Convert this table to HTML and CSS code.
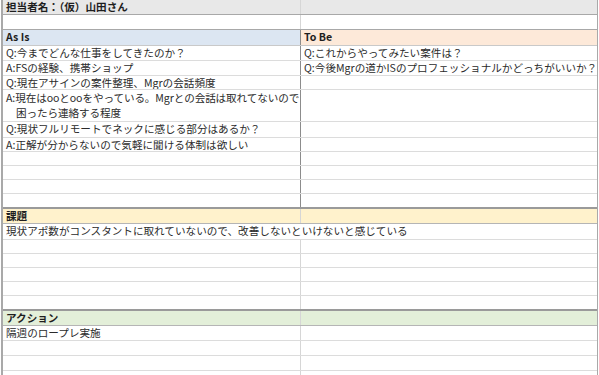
FILE: index.html
```html
<!DOCTYPE html>
<html lang="ja">
<head>
<meta charset="utf-8">
<title>面談メモ</title>
<link rel="stylesheet" href="styles.css">
</head>
<body>
<div class="sheet">
  <div class="row title h15 thick"><div class="c l bold">担当者名：（仮）山田さん</div><div class="c r"></div></div>
  <div class="row h15 thick"><div class="c l"></div><div class="c r"></div></div>

  <div class="row h16 asis-head"><div class="c l dark blue bold">As Is</div><div class="c r peach bold">To Be</div></div>
  <div class="row h15"><div class="c l dark">Q:今までどんな仕事をしてきたのか？</div><div class="c r">Q:これからやってみたい案件は？</div></div>
  <div class="row h15"><div class="c l dark">A:FSの経験、携帯ショップ</div><div class="c r">Q:今後Mgrの道かISのプロフェッショナルかどっちがいいか？</div></div>
  <div class="row h14"><div class="c l dark">Q:現在アサインの案件整理、Mgrの会話頻度</div><div class="c r"></div></div>
  <div class="row h32"><div class="c l dark wrap"><span class="line">A:現在はooとooをやっている。Mgrとの会話は取れてないので</span><span class="line indent">困ったら連絡する程度</span></div><div class="c r"></div></div>
  <div class="row h16"><div class="c l dark">Q:現状フルリモートでネックに感じる部分はあるか？</div><div class="c r"></div></div>
  <div class="row h14"><div class="c l dark">A:正解が分からないので気軽に聞ける体制は欲しい</div><div class="c r"></div></div>
  <div class="row h14"><div class="c l dark"></div><div class="c r"></div></div>
  <div class="row h14"><div class="c l dark"></div><div class="c r"></div></div>
  <div class="row h14"><div class="c l dark"></div><div class="c r"></div></div>
  <div class="row h15 thick2"><div class="c l dark"></div><div class="c r"></div></div>

  <div class="row h15 yellow mid"><div class="c l bold">課題</div><div class="c r"></div></div>
  <div class="row h16"><div class="c l over">現状アポ数がコンスタントに取れていないので、改善しないといけないと感じている</div><div class="c r"></div></div>
  <div class="row h14"><div class="c l"></div><div class="c r"></div></div>
  <div class="row h14"><div class="c l"></div><div class="c r"></div></div>
  <div class="row h14"><div class="c l"></div><div class="c r"></div></div>
  <div class="row h14"><div class="c l"></div><div class="c r"></div></div>
  <div class="row h15 thick2"><div class="c l"></div><div class="c r"></div></div>

  <div class="row h15 green mid"><div class="c l bold">アクション</div><div class="c r"></div></div>
  <div class="row h15"><div class="c l">隔週のロープレ実施</div><div class="c r"></div></div>
  <div class="row h15"><div class="c l"></div><div class="c r"></div></div>
  <div class="row h15"><div class="c l"></div><div class="c r"></div></div>
  <div class="row h15"><div class="c l"></div><div class="c r"></div></div>
</div>
</body>
</html>
```

FILE: styles.css
```css
html, body {
  margin: 0;
  padding: 0;
  background: #ffffff;
}

body {
  font-family: "Noto Sans CJK JP", "Noto Sans", sans-serif;
  font-size: 10.6px;
  color: #2b2b2b;
}

.sheet {
  width: 594px;
  margin-left: 1px;
  border-left: 2px solid #a9a9a9;
  border-right: 1px solid #a9a9a9;
  height: 375px;
  overflow: hidden;
}

.row {
  display: grid;
  grid-template-columns: 298px 1fr;
  border-bottom: 1px solid #dcdcdc;
  box-sizing: border-box;
}

.h14 { height: 14px; }
.h15 { height: 15px; }
.h16 { height: 16px; }
.h32 { height: 32px; }

.row.thick { border-bottom: 1px solid #a8a8a8; }
.row.thick2 { border-bottom: 2px solid #9a9a9a; }
.row.mid { border-bottom: 1px solid #b5b5b5; }
.row.asis-head { border-bottom: 1px solid #c9c9c9; }

.c {
  box-sizing: border-box;
  padding-left: 3px;
  white-space: nowrap;
  line-height: 14px;
  overflow: hidden;
}

.l { border-right: 1px solid #d6d6d6; }
.l.dark { border-right: 1px solid #8c8c8c; }

.over {
  overflow: visible;
  position: relative;
  z-index: 1;
  border-right-color: transparent;
}

.wrap {
  display: flex;
  flex-direction: column;
  line-height: 15px;
}

.line { display: block; letter-spacing: -0.1px; }
.indent { padding-left: 10px; }

.bold { font-weight: bold; color: #1e1e1e; }

.title { background: #e8e8e8; }

.blue { background: #dce6f2; }
.peach { background: #fde9d9; }
.yellow { background: #fff2cc; }
.green { background: #e3efd9; }
```
